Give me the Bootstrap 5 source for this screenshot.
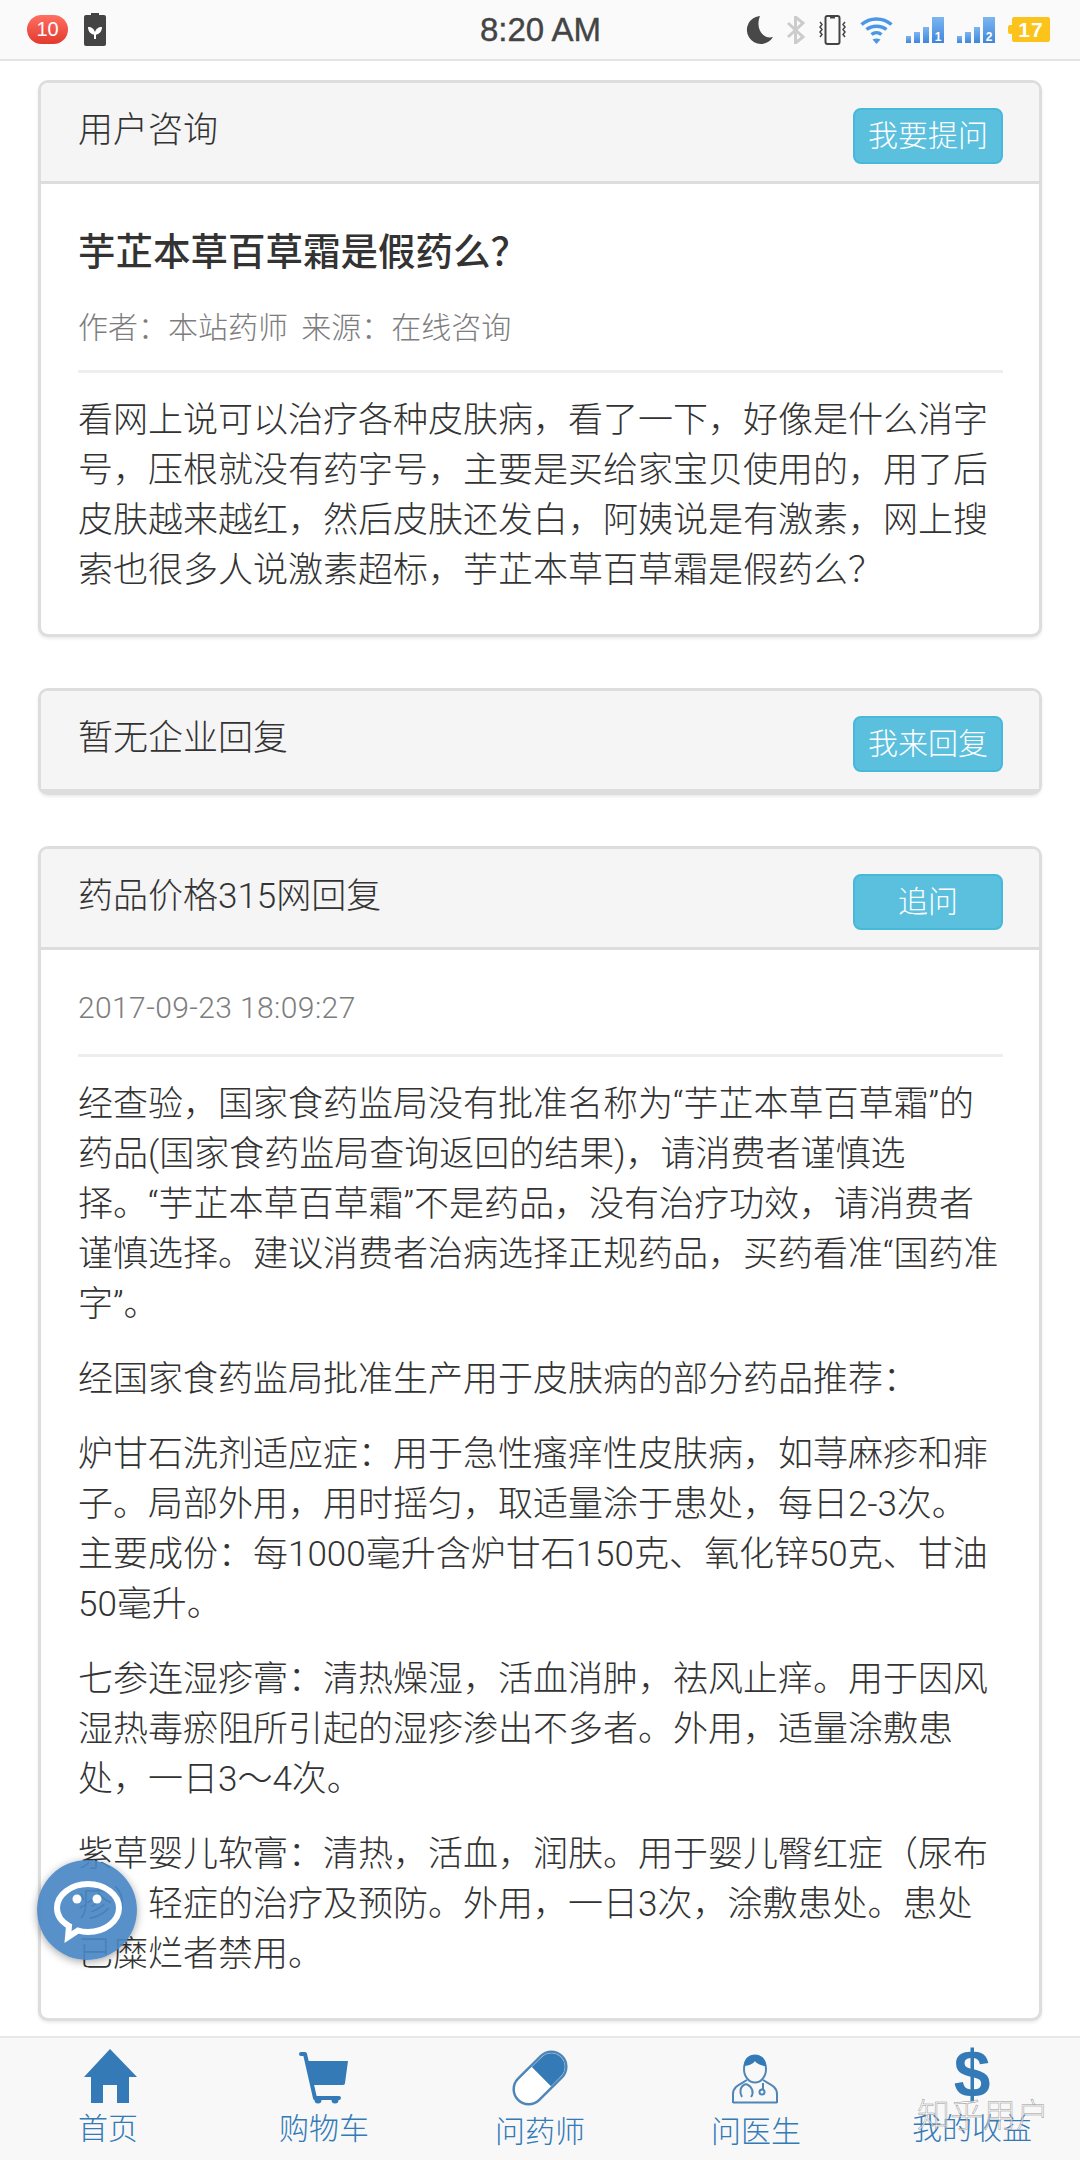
<!doctype html>
<html lang="zh-CN">
<head>
<meta charset="utf-8">
<title>用户咨询</title>
<link href="https://cdn.jsdelivr.net/npm/bootstrap@5.3.0/dist/css/bootstrap.min.css" rel="stylesheet">
<style>
html,body{height:2160px;margin:0;overflow:hidden}
body{font-family:Roboto,"Noto Sans CJK SC",sans-serif;font-size:35px;line-height:50px;color:#333;background:#fff;position:relative;font-weight:300}
.status-strip{height:61px;background:#fafafa;border-bottom:2px solid #e4e4e4;padding:0 30px 0 27px;flex:none}
.status-side{flex:1 1 0}
.status-time{font-family:"Liberation Sans",sans-serif;font-size:33px;font-weight:400;color:#444;line-height:1;-webkit-text-stroke:.4px #444;margin-left:4px}
.notify-pill{width:41px;height:29px;border-radius:15px;background:linear-gradient(#ff6f62,#e23a2e);color:#fff;font-family:"Liberation Sans",sans-serif;font-size:20px;line-height:29px;text-align:center;font-weight:400}
.cell-num{width:38px;height:25px;display:flex;align-items:center;justify-content:center;background:#fbc31b;color:#fff;font-family:"Liberation Sans",sans-serif;font-size:21px;font-weight:700;letter-spacing:1px;border-radius:2px;margin-left:4px;position:relative}
.cell-num::before{content:"";position:absolute;left:-4px;top:8px;width:4px;height:9px;background:#fbc31b;border-radius:2px 0 0 2px}
.page-main{padding:19px 38px 0;overflow:hidden}
.qa-card{border:3px solid #ddd;border-radius:10px;box-shadow:0 2px 3px rgba(0,0,0,.08);margin-bottom:51px;background:#fff}
.qa-card .card-header{background:#f5f5f5;border-bottom:3px solid #ddd;padding:25px 36px 17px 37px;border-radius:7px 7px 0 0}
.qa-card .card-body{padding:43px 36px 38px 37px}
.head-title{font-size:35px;line-height:50px;margin:-2px 0 0;font-weight:300;color:#333}
.ask-btn{width:150px;height:56px;padding:0;font-size:30px;line-height:52px;background:#5bc0de;border:2px solid #46b8da;color:#fff;border-radius:8px;font-weight:300}
.q-title{font-size:37.5px;line-height:50px;font-weight:500;color:#333;margin:0 0 26px}
.q-meta{font-size:30px;line-height:50px;color:#7d7d7d;margin:0 0 17px;word-spacing:6px}
.q-date{font-size:30px;line-height:50px;color:#7d7d7d;margin:-10px 0 21px;letter-spacing:.4px}
.thin-rule{border:0;border-top:3px solid #eee;opacity:1;margin:0 0 23px}
.q-text{margin:0 0 25px}
.q-text:last-child{margin-bottom:0}
.tab-strip{height:124px;background:#f8f8f8;border-top:2px solid #e7e7e7;flex:none}
.tab-cell{flex:1 1 0;padding-top:8px;color:#337ab7;font-size:30px;line-height:30px}
.tab-cell svg{display:block}
.tab-label{margin-top:8px}
.tab-label-low{margin-top:11px}
.dollar-mark{height:60px;font-family:"Liberation Sans",sans-serif;font-size:66px;line-height:56px;font-weight:700;color:#337ab7}
.chat-float{position:absolute;left:37px;top:1860px;width:100px;height:100px;border-radius:50%;background:rgba(74,136,196,.92);box-shadow:0 2px 8px rgba(0,0,0,.35)}
.wm-text{position:absolute;left:917px;top:2094px;font-size:33px;line-height:44px;color:rgba(255,255,255,.6);-webkit-text-stroke:.5px rgba(120,120,120,.8);font-weight:300}
</style>
</head>
<body class="d-flex flex-column">

<header class="status-strip d-flex align-items-center">
  <div class="status-side d-flex align-items-center gap-3">
    <div class="notify-pill">10</div>
    <svg width="22" height="33" viewBox="0 0 22 33"><rect x="7" y="0" width="8" height="3" fill="#444"/><rect x="0" y="2" width="22" height="31" rx="2" fill="#444"/><path d="M11 22C6 21 4 18 4 14c4 0 6 2 7 5 1-3 3-5 7-5 0 4-2 7-7 8zM10 21h2v5h-2z" fill="#fff"/></svg>
  </div>
  <div class="status-time">8:20 AM</div>
  <div class="status-side d-flex align-items-center justify-content-end" style="gap:13px">
    <svg width="27" height="28" viewBox="0 0 27 28"><path d="M14 0A14 14 0 1 0 27 21C17 24 9 12 14 0z" fill="#484848"/></svg>
    <svg width="19" height="28" viewBox="0 0 19 28"><path d="M2 7l15 14-7.500 6V1L17 7 2 21" fill="none" stroke="#ccc" stroke-width="3"/></svg>
    <svg width="29" height="30" viewBox="0 0 29 30"><rect x="7.500" y="1" width="14" height="28" rx="2" fill="none" stroke="#444" stroke-width="2"/><rect x="12" y="2" width="5" height="1.500" fill="#444"/><path d="M2 7l2 2.500-2 2.500 2 2.500-2 2.500 2 2.500-2 2.500M27 7l-2 2.500 2 2.500-2 2.500 2 2.500-2 2.500 2 2.500" fill="none" stroke="#444" stroke-width="1.500"/></svg>
    <svg width="33" height="28" viewBox="0 0 33 28"><g fill="none" stroke="#4a97ea" stroke-width="3.500"><path d="M1.500 8.500C10 1 23 1 31.500 8.500"/><path d="M6.500 13.500C12 9 21 9 26.500 13.500"/><path d="M11.500 18.500C14.500 16 18.500 16 21.500 18.500"/></g><path d="M16.500 28l-4-4.500c2.500-1.500 5.500-1.500 8 0z" fill="#4a97ea"/></svg>
    <svg width="38" height="26" viewBox="0 0 38 26"><defs><linearGradient id="barfill" x1="0" y1="0" x2="0" y2="1"><stop offset="0" stop-color="#7cb6f2"/><stop offset="1" stop-color="#3f86d8"/></linearGradient></defs><g fill="url(#barfill)"><rect x="0" y="19" width="5" height="7"/><rect x="8" y="15" width="6" height="11"/><rect x="17" y="10" width="6" height="16"/><rect x="26" y="0" width="12" height="26"/></g><text x="32" y="24" text-anchor="middle" font-size="12" font-weight="700" fill="#fff" font-family="Liberation Sans">1</text></svg>
    <svg width="38" height="26" viewBox="0 0 38 26"><g fill="url(#barfill)"><rect x="0" y="19" width="5" height="7"/><rect x="8" y="15" width="6" height="11"/><rect x="17" y="10" width="6" height="16"/><rect x="26" y="0" width="12" height="26"/></g><text x="32" y="24" text-anchor="middle" font-size="12" font-weight="700" fill="#fff" font-family="Liberation Sans">2</text></svg>
    <div class="cell-num">17</div>
  </div>
</header>

<main class="page-main flex-grow-1">
  <section class="card qa-card">
    <div class="card-header d-flex justify-content-between align-items-start">
      <h3 class="head-title">用户咨询</h3>
      <button type="button" class="btn ask-btn">我要提问</button>
    </div>
    <div class="card-body">
      <h4 class="q-title">芋芷本草百草霜是假药么？</h4>
      <p class="q-meta">作者：本站药师&nbsp;来源：在线咨询</p>
      <hr class="thin-rule">
      <p class="q-text">看网上说可以治疗各种皮肤病，看了一下，好像是什么消字号，压根就没有药字号，主要是买给家宝贝使用的，用了后皮肤越来越红，然后皮肤还发白，阿姨说是有激素，网上搜索也很多人说激素超标，芋芷本草百草霜是假药么？</p>
    </div>
  </section>

  <section class="card qa-card">
    <div class="card-header d-flex justify-content-between align-items-start">
      <h3 class="head-title">暂无企业回复</h3>
      <button type="button" class="btn ask-btn">我来回复</button>
    </div>
  </section>

  <section class="card qa-card">
    <div class="card-header d-flex justify-content-between align-items-start">
      <h3 class="head-title">药品价格315网回复</h3>
      <button type="button" class="btn ask-btn">追问</button>
    </div>
    <div class="card-body">
      <p class="q-date">2017-09-23 18:09:27</p>
      <hr class="thin-rule">
      <p class="q-text">经查验，国家食药监局没有批准名称为“芋芷本草百草霜”的药品(国家食药监局查询返回的结果)，请消费者谨慎选<br>择。“芋芷本草百草霜”不是药品，没有治疗功效，请消费者谨慎选择。建议消费者治病选择正规药品，买药看准“国药准字”。</p>
      <p class="q-text">经国家食药监局批准生产用于皮肤病的部分药品推荐：</p>
      <p class="q-text">炉甘石洗剂适应症：用于急性瘙痒性皮肤病，如荨麻疹和痱子。局部外用，用时摇匀，取适量涂于患处，每日2-3次。<br>主要成份：每1000毫升含炉甘石150克、氧化锌50克、甘油<br>50毫升。</p>
      <p class="q-text">七参连湿疹膏：清热燥湿，活血消肿，祛风止痒。用于因风湿热毒瘀阻所引起的湿疹渗出不多者。外用，适量涂敷患处，一日3～4次。</p>
      <p class="q-text">紫草婴儿软膏：清热，活血，润肤。用于婴儿臀红症（尿布疹）轻症的治疗及预防。外用，一日3次，涂敷患处。患处已糜烂者禁用。</p>
    </div>
  </section>
</main>

<nav class="tab-strip d-flex text-center">
  <div class="tab-cell d-flex flex-column align-items-center">
    <svg width="60" height="60" viewBox="0 0 60 60"><path d="M32 3L59 31H51V57H39V39H25V57H13V31H6z" fill="#337ab7"/></svg>
    <div class="tab-label">首页</div>
  </div>
  <div class="tab-cell d-flex flex-column align-items-center">
    <svg width="60" height="60" viewBox="0 0 60 60"><path d="M7 8h4l10 44h24" fill="none" stroke="#337ab7" stroke-width="4" stroke-linecap="round" stroke-linejoin="round"/><path d="M14 15H54L51 37Q51 39 49 39H19z" fill="#337ab7"/><circle cx="24" cy="54" r="3.500" fill="#337ab7"/><circle cx="41" cy="54" r="3.500" fill="#337ab7"/></svg>
    <div class="tab-label">购物车</div>
  </div>
  <div class="tab-cell d-flex flex-column align-items-center">
    <svg width="60" height="60" viewBox="0 0 60 60"><g transform="translate(30 32) rotate(-45)"><rect x="-31" y="-15" width="62" height="30" rx="15" fill="#fff" stroke="#4f86b8" stroke-width="2.500"/><path d="M2 -13.500H16A13.500 13.500 0 0 1 16 13.500H2z" fill="#337ab7"/></g></svg>
    <div class="tab-label-low">问药师</div>
  </div>
  <div class="tab-cell d-flex flex-column align-items-center">
    <svg width="60" height="60" viewBox="0 0 60 60"><g fill="none" stroke="#4f86b8" stroke-width="2"><ellipse cx="29" cy="23" rx="11" ry="13.500"/><path d="M7 57V48C7 40 15 38 21 34M51 57V48C51 40 43 38 37 34M7 56.500H51"/><path d="M20 38C14 40 13 46 16 51M20 38C27 41 28 47 25 51"/><path d="M37 37V44"/><circle cx="36" cy="46" r="2.500"/></g><path d="M18 20C18 12 23 9 29 9S40 12 40 20C35 20 30 17 29 15C28 17 23 20 18 20z" fill="#337ab7"/></svg>
    <div class="tab-label-low">问医生</div>
  </div>
  <div class="tab-cell d-flex flex-column align-items-center">
    <div class="dollar-mark">$</div>
    <div class="tab-label">我的收益</div>
  </div>
</nav>

<div class="chat-float">
  <svg width="100" height="100" viewBox="0 0 100 100"><path d="M51 24C34 24 20 35 20 48C20 56 25 62 32 66L31 77L41 70.500C44 71.500 48 72 51 72C68 72 82 61 82 48S68 24 51 24z" fill="none" stroke="#fff" stroke-width="6"/><circle cx="40" cy="39" r="4.500" fill="#fff"/><circle cx="60" cy="39" r="4.500" fill="#fff"/></svg>
</div>
<div class="wm-text">知乎用户</div>
</body>
</html>
